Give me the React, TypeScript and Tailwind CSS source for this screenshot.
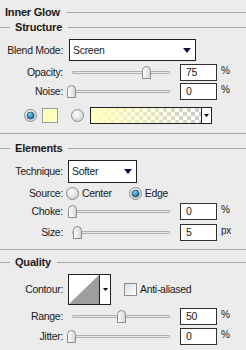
import React from "react";

const Arrow = () => (
  <svg width="8" height="5" viewBox="0 0 8 5"><path d="M0 0H8L4 5Z" fill="#10104a" /></svg>
);

const Thumb = () => (
  <svg width="9" height="13" viewBox="0 0 9 13">
    <defs>
      <linearGradient id="tg" x1="0" y1="0" x2="1" y2="0">
        <stop offset="0" stopColor="#ffffff" />
        <stop offset="1" stopColor="#d6d6d6" />
      </linearGradient>
    </defs>
    <path d="M0.5 4.5A4 4 0 0 1 8.5 4.5V12.5H0.5Z" fill="url(#tg)" stroke="#8a8a8a" />
  </svg>
);

function Slider({ pos }: { pos: number }) {
  return (
    <div className="relative w-[98px] h-[13px] ml-[9px]">
      <div className="absolute left-0 right-0 top-[5px] h-[3px] border border-[#b0b0b0] bg-[#e6e6e6] rounded-[1px]" />
      <div className="absolute top-0" style={{ left: pos - 72 - 4 }}>
        <Thumb />
      </div>
    </div>
  );
}

function SliderRow({ label, pos, value, unit, h = "h-[17px]", mt }: { label: string; pos: number; value: string; unit: string; h?: string; mt: string }) {
  return (
    <div className={`flex items-center ${h} ${mt}`}>
      <div className="w-[63px] text-right">{label}</div>
      <Slider pos={pos} />
      <div className="ml-[10px] w-[37px] h-[17px] bg-white border border-[#303030] flex items-center pl-[5px]">{value}</div>
      <div className="ml-[4px] -mt-[3px] text-[10px]">{unit}</div>
    </div>
  );
}

function Header({ text, mt, indent }: { text: string; mt: string; indent?: boolean }) {
  return (
    <div className={`flex items-center h-[14px] ${mt}`}>
      {indent ? <div className="w-[10px] h-px bg-[#a8a8a8]" /> : null}
      <div className="font-bold ml-[5px] text-[11px] tracking-[-0.2px]">{text}</div>
      <div className="flex-1 h-px bg-[#a8a8a8] ml-[6px]" />
    </div>
  );
}

function Radio({ on }: { on?: boolean }) {
  return (
    <svg width="13" height="13" viewBox="0 0 13 13">
      <defs>
        <radialGradient id="rb" cx="0.4" cy="0.35" r="0.7">
          <stop offset="0" stopColor="#ffffff" />
          <stop offset="1" stopColor="#d0d0d0" />
        </radialGradient>
        <radialGradient id="rd" cx="0.4" cy="0.35" r="0.7">
          <stop offset="0" stopColor="#7fd0f0" />
          <stop offset="1" stopColor="#0a5a8a" />
        </radialGradient>
      </defs>
      <circle cx="6.5" cy="6.5" r="6" fill="url(#rb)" stroke="#8e8e8e" />
      {on ? <circle cx="6.5" cy="6.5" r="3.6" fill="url(#rd)" stroke="#114466" strokeWidth="0.6" /> : null}
    </svg>
  );
}

export default function App() {
  return (
    <div
      className="w-[246px] h-[350px] bg-[#ececec] text-[#1a1a1a] text-[10.5px] tracking-[-0.3px] leading-none overflow-hidden flex flex-col"
      style={{ fontFamily: '"Liberation Sans", Arial, sans-serif' }}
    >
      <Header text="Inner Glow" mt="mt-[5px]" />
      <Header text="Structure" mt="mt-[1px]" indent />
      <div className="flex items-center h-[22px] mt-[5px]">
        <div className="w-[63px] text-right">Blend Mode:</div>
        <div className="ml-[6px] w-[127px] h-[22px] bg-white border border-[#202020] flex items-center justify-between pl-[3px] pr-[4px]">
          <span>Screen</span>
          <Arrow />
        </div>
      </div>
      <SliderRow label="Opacity:" pos={146} value="75" unit="%" mt="mt-[2px]" h="h-[18px]" />
      <SliderRow label="Noise:" pos={71} value="0" unit="%" mt="mt-[1px]" h="h-[18px]" />
      <div className="flex items-center h-[17px] mt-[7px]">
        <div className="ml-[24px]"><Radio on /></div>
        <div className="ml-[5px] w-[16px] h-[15px] bg-[#ffffc0] border border-[#9a9a9a]" />
        <div className="ml-[13px]"><Radio /></div>
        <div className="ml-[6px] w-[122px] h-[17px] border border-[#202020] flex bg-white">
          <svg width="110" height="15" viewBox="0 0 110 15">
            <defs>
              <pattern id="ck" width="8" height="8" patternUnits="userSpaceOnUse">
                <rect width="8" height="8" fill="#ffffff" />
                <rect width="4" height="4" fill="#cccccc" />
                <rect x="4" y="4" width="4" height="4" fill="#cccccc" />
              </pattern>
              <linearGradient id="yg" x1="0" y1="0" x2="1" y2="0">
                <stop offset="0" stopColor="#ffffc0" stopOpacity="1" />
                <stop offset="1" stopColor="#ffffc0" stopOpacity="0" />
              </linearGradient>
            </defs>
            <rect width="110" height="15" fill="url(#ck)" />
            <rect width="110" height="15" fill="url(#yg)" />
          </svg>
          <div className="flex-1 border-l border-[#202020] flex items-center justify-center">
            <svg width="5" height="3" viewBox="0 0 5 3"><path d="M0 0H5L2.5 3Z" fill="#000" /></svg>
          </div>
        </div>
      </div>
      <div className="mt-[9px] h-px bg-[#a8a8a8]" />
      <Header text="Elements" mt="mt-[7px]" indent />
      <div className="flex items-center h-[23px] mt-[5px]">
        <div className="w-[63px] text-right">Technique:</div>
        <div className="ml-[5px] w-[69px] h-[23px] bg-white border border-[#202020] flex items-center justify-between pl-[3px] pr-[4px]">
          <span>Softer</span>
          <Arrow />
        </div>
      </div>
      <div className="flex items-center h-[14px] mt-[3px]">
        <div className="w-[63px] text-right">Source:</div>
        <div className="ml-[3px]"><Radio /></div>
        <div className="ml-[3px]">Center</div>
        <div className="ml-[17px]"><Radio on /></div>
        <div className="ml-[3px]">Edge</div>
      </div>
      <SliderRow label="Choke:" pos={72} value="0" unit="%" mt="mt-[3px]" />
      <SliderRow label="Size:" pos={77} value="5" unit="px" mt="mt-[4px]" />
      <div className="mt-[8px] h-px bg-[#a8a8a8]" />
      <Header text="Quality" mt="mt-[5px]" indent />
      <div className="flex items-center h-[31px] mt-[5px]">
        <div className="w-[63px] text-right">Contour:</div>
        <div className="ml-[5px] w-[43px] h-[31px] border border-[#202020] bg-white flex">
          <svg width="30" height="29" viewBox="0 0 30 29">
            <path d="M0 29L30 0V29Z" fill="#9e9e9e" />
          </svg>
          <div className="flex-1 border-l border-[#202020] flex items-center justify-center">
            <svg width="5" height="3" viewBox="0 0 5 3"><path d="M0 0H5L2.5 3Z" fill="#000" /></svg>
          </div>
        </div>
        <div className="ml-[13px] w-[13px] h-[13px] border border-[#8e8e8e] bg-[linear-gradient(135deg,#dcdcdc,#ffffff)]" />
        <div className="ml-[3px]">Anti-aliased</div>
      </div>
      <SliderRow label="Range:" pos={121} value="50" unit="%" mt="mt-[3px]" />
      <SliderRow label="Jitter:" pos={71} value="0" unit="%" mt="mt-[3px]" />
    </div>
  );
}
